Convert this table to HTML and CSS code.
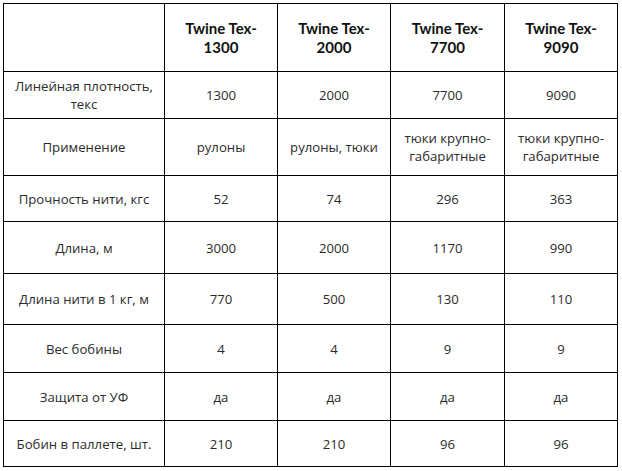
FILE: index.html
```html
<!DOCTYPE html>
<html lang="ru">
<head>
<meta charset="utf-8">
<link rel="stylesheet" href="styles.css">
</head>
<body>
<table class="specs">
  <colgroup>
    <col class="c-label">
    <col class="c-val">
    <col class="c-val">
    <col class="c-val3">
    <col class="c-val">
  </colgroup>
  <tr class="r-head">
    <th></th>
    <th>Twine Tex-1300</th>
    <th>Twine Tex-2000</th>
    <th>Twine Tex-7700</th>
    <th>Twine Tex-9090</th>
  </tr>
  <tr class="r1">
    <td>Линейная плотность, текс</td>
    <td>1300</td>
    <td>2000</td>
    <td>7700</td>
    <td>9090</td>
  </tr>
  <tr class="r2">
    <td>Применение</td>
    <td>рулоны</td>
    <td>рулоны, тюки</td>
    <td>тюки крупно-габаритные</td>
    <td>тюки крупно-габаритные</td>
  </tr>
  <tr class="r3">
    <td>Прочность нити, кгс</td>
    <td>52</td>
    <td>74</td>
    <td>296</td>
    <td>363</td>
  </tr>
  <tr class="r4">
    <td>Длина, м</td>
    <td>3000</td>
    <td>2000</td>
    <td>1170</td>
    <td>990</td>
  </tr>
  <tr class="r5">
    <td>Длина нити в 1 кг, м</td>
    <td>770</td>
    <td>500</td>
    <td>130</td>
    <td>110</td>
  </tr>
  <tr class="r6">
    <td>Вес бобины</td>
    <td>4</td>
    <td>4</td>
    <td>9</td>
    <td>9</td>
  </tr>
  <tr class="r7">
    <td>Защита от УФ</td>
    <td>да</td>
    <td>да</td>
    <td>да</td>
    <td>да</td>
  </tr>
  <tr class="r8">
    <td>Бобин в паллете, шт.</td>
    <td>210</td>
    <td>210</td>
    <td>96</td>
    <td>96</td>
  </tr>
</table>
</body>
</html>
```
FILE: styles.css
```css
html, body {
  margin: 0;
  padding: 0;
  background: #ffffff;
}
body {
  padding: 3px 0 0 3px;
}
.specs {
  border-collapse: collapse;
  table-layout: fixed;
  width: 615px;
  font-family: "Open Sans", "Liberation Sans", sans-serif;
  font-size: 13.2px;
  color: #2b2b2b;
}
.c-label { width: 161px; }
.c-val { width: 113px; }
.c-val3 { width: 114px; }
.specs th,
.specs td {
  border: 1px solid #000000;
  text-align: center;
  vertical-align: middle;
  padding: 0 6px;
  line-height: 18px;
}
.specs th {
  font-family: "Lato", "Liberation Sans", sans-serif;
  font-weight: 700;
  font-size: 15px;
  line-height: 19px;
  color: #111111;
  padding: 0 10px;
}
.r-head th { height: 67px; }
.r1 td { height: 46px; }
.r2 td { height: 56px; }
.r3 td { height: 45px; }
.r4 td { height: 51px; }
.r5 td { height: 50px; }
.r6 td { height: 47px; }
.r7 td { height: 47px; }
.r8 td { height: 45px; }
```
